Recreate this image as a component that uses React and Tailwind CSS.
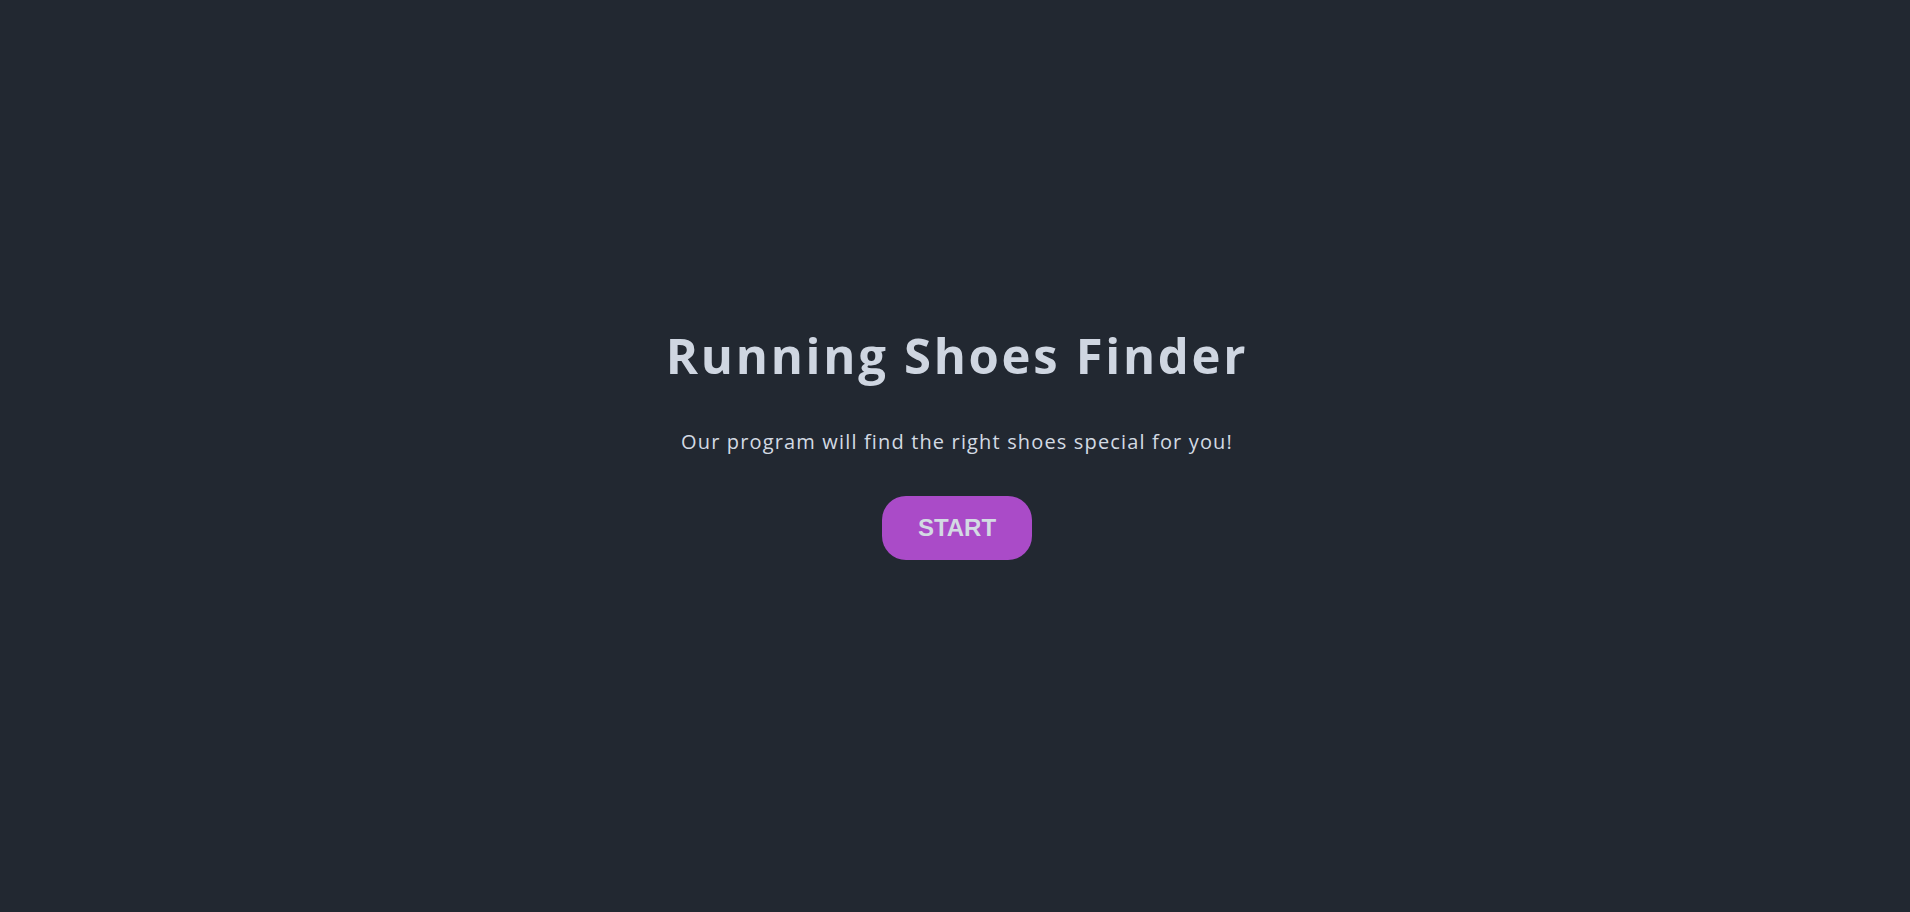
export default function App() {
  return (
    <div className="h-screen w-full bg-[#222831] flex flex-col items-center justify-center pb-[22px] pl-[4px]" style={{ fontFamily: '"Open Sans", sans-serif' }}>
      <h1 className="text-[49px] font-bold text-[#cfd6e1] leading-none tracking-[2.7px]">Running Shoes Finder</h1>
      <p className="mt-[52px] text-[20px] text-[#d3dae3] leading-none tracking-[1.15px]">Our program will find the right shoes special for you!</p>
      <button className="mt-[44px] w-[150px] h-[64px] rounded-[24px] bg-[#aa4bc8] text-[#d3dae3] text-[24px] font-bold" style={{ fontFamily: '"Liberation Sans", Arial, sans-serif' }}>START</button>
    </div>
  );
}
